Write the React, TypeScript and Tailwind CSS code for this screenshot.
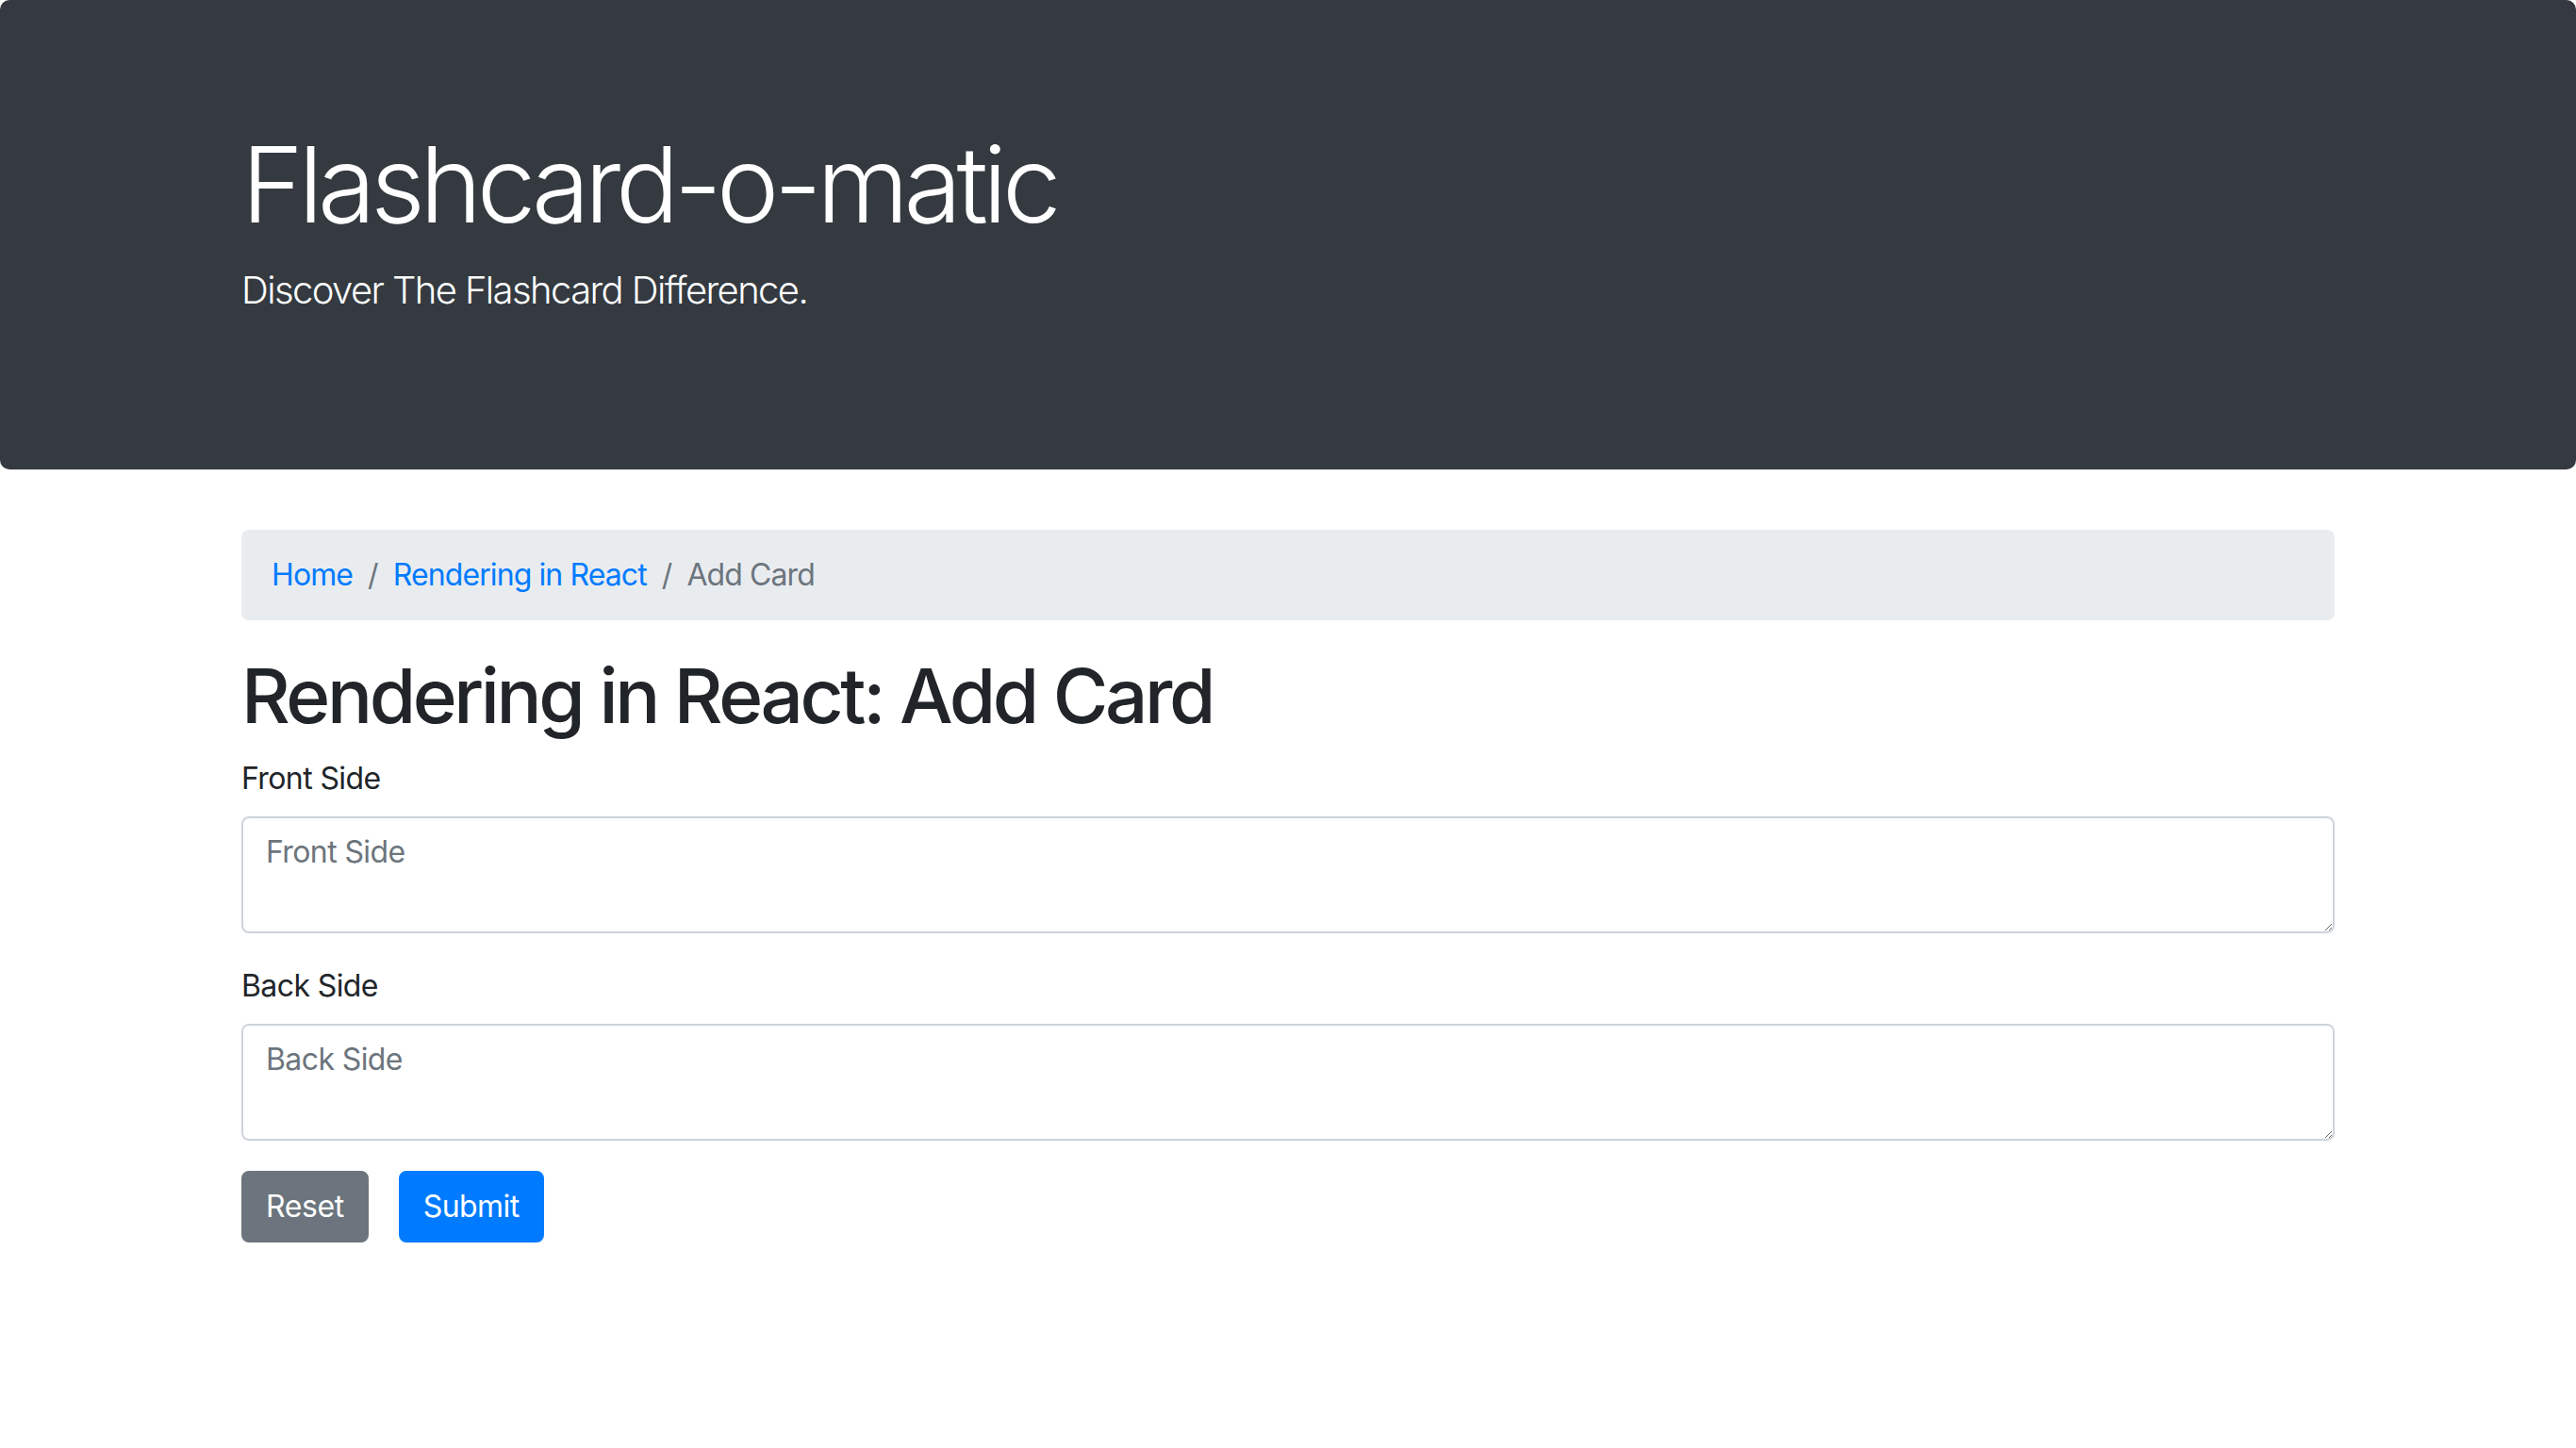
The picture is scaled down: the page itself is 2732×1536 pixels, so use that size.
import React from "react";

const font = "font-['Inter','Noto_Sans','Liberation_Sans',sans-serif]";

const Crumb = ({ children, link, first }: { children: React.ReactNode; link?: boolean; first?: boolean }) => (
  <li className="flex">
    {!first && <span className="px-4 text-[#6c757d]">/</span>}
    <span className={link ? "text-[#007bff]" : "text-[#6c757d]"}>{children}</span>
  </li>
);

const Field = ({ label }: { label: string }) => (
  <div className="mb-8">
    <label className="mb-4 block text-[32px] leading-[48px]">{label}</label>
    <textarea
      rows={2}
      placeholder={label}
      className="block h-[124px] w-full resize-y rounded-lg border-2 border-[#ced4da] bg-white px-6 py-3 text-[32px] leading-[48px] tracking-[-0.6px] text-[#495057] outline-none placeholder:text-[#6c757d]"
    />
  </div>
);

export default function App() {
  return (
    <div className={`min-h-screen bg-white text-[#212529] tracking-[-0.6px] ${font}`}>
      {/* Jumbotron */}
      <div className="mb-16 rounded-[10px] bg-[#343a40] px-16 py-32 text-white">
        <div className="mx-auto w-[2280px] px-[30px]">
          <h1 className="mb-4 text-[112px] font-light leading-[1.2] tracking-[-5.5px]">Flashcard-o-matic</h1>
          <p className="mb-8 text-[40px] font-light leading-[1.5] tracking-[-1.6px]">Discover The Flashcard Difference.</p>
        </div>
      </div>

      <div className="mx-auto w-[2280px] px-[30px]">
        <nav>
          <ol className="mb-8 flex rounded-lg bg-[#e9ecef] px-8 py-6 text-[32px] leading-[48px] tracking-[-0.9px]">
            <Crumb link first>Home</Crumb>
            <Crumb link>Rendering in React</Crumb>
            <Crumb>Add Card</Crumb>
          </ol>
        </nav>

        <h1 className="mb-4 text-[80px] font-medium leading-[1.2] tracking-[-3.4px]">Rendering in React: Add Card</h1>

        <form>
          <Field label="Front Side" />
          <Field label="Back Side" />
          <div className="flex gap-8">
            <button
              type="button"
              className="rounded-lg border-2 border-[#6c757d] bg-[#6c757d] px-6 py-3 text-[32px] leading-[48px] tracking-[-0.4px] text-white"
            >
              Reset
            </button>
            <button
              type="submit"
              className="rounded-lg border-2 border-[#007bff] bg-[#007bff] px-6 py-3 text-[32px] leading-[48px] tracking-[-0.6px] text-white"
            >
              Submit
            </button>
          </div>
        </form>
      </div>
    </div>
  );
}
